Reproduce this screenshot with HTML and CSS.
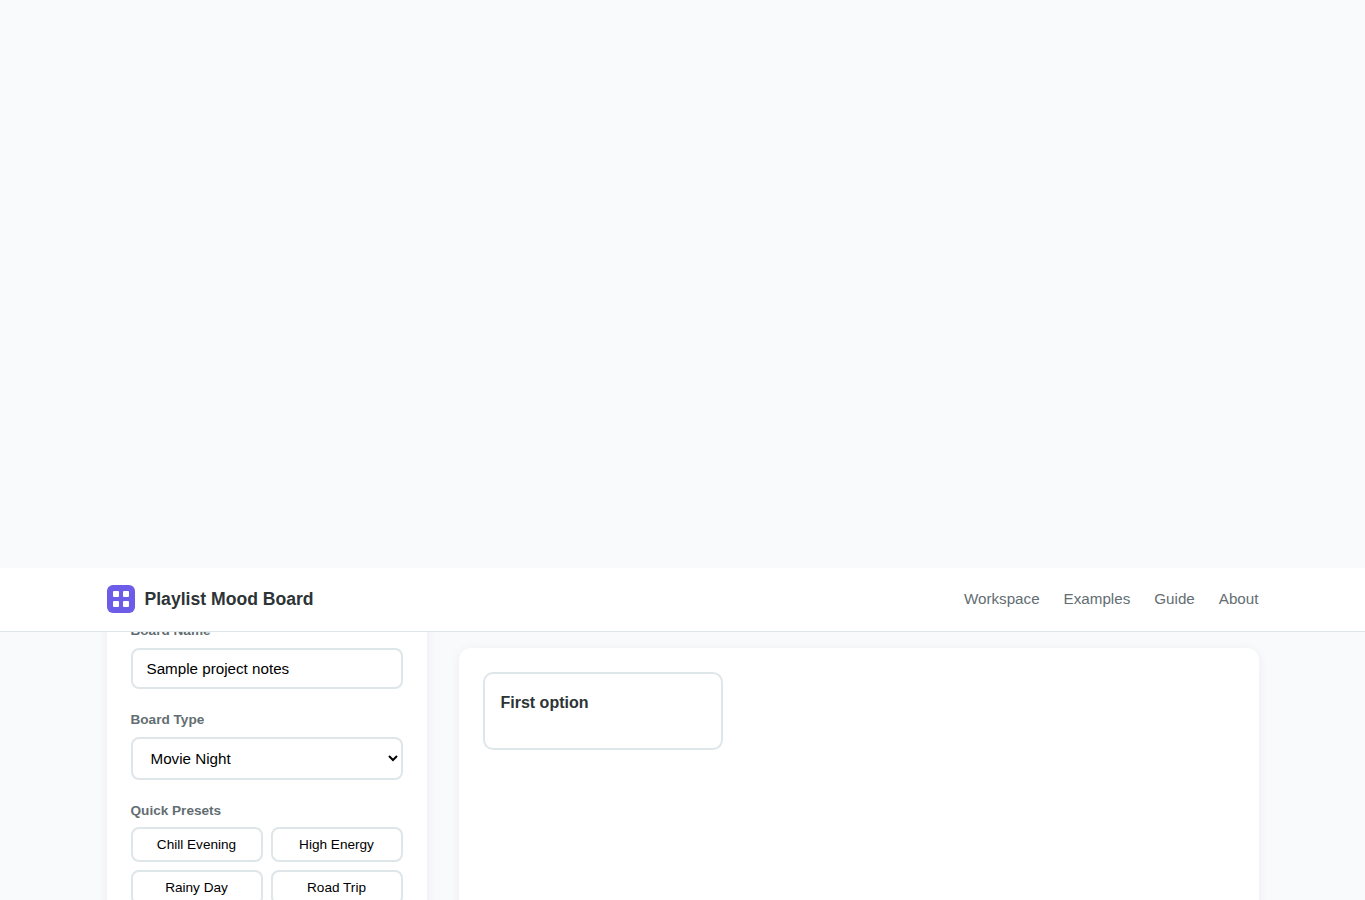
FILE: index.html
```html
<!DOCTYPE html>
<html lang="en">
  <head>
    <meta charset="UTF-8" />
    <meta name="viewport" content="width=device-width, initial-scale=1.0" />
    <title>Playlist Mood Board</title>
    <link rel="stylesheet" href="styles.css">
  </head>
  <body>
    <header class="header">
      <div class="header-inner">
        <a href="#" class="logo">
          <svg width="28" height="28" viewBox="0 0 28 28">
            <rect width="28" height="28" rx="6" fill="#6c5ce7" />
            <rect x="6" y="6" width="6" height="6" rx="1" fill="white" />
            <rect x="16" y="6" width="6" height="6" rx="1" fill="white" />
            <rect x="6" y="16" width="6" height="6" rx="1" fill="white" />
            <rect x="16" y="16" width="6" height="6" rx="1" fill="white" />
          </svg>
          <span>Playlist Mood Board</span>
        </a>
        <nav class="nav">
          <a href="#">Workspace</a>
          <a href="#">Examples</a>
          <a href="#">Guide</a>
          <a href="#">About</a>
        </nav>
      </div>
    </header>

    <main class="workspace">
      <aside class="controls">
        <div class="control-group">
          <label for="board-name">Board Name</label>
          <input type="text" id="board-name" value="Sample project notes" />
        </div>
        <div class="control-group">
          <label for="board-type">Board Type</label>
          <select id="board-type">
            <option>Movie Night</option>
          </select>
        </div>
        <div class="control-group">
          <label>Quick Presets</label>
          <div class="presets">
            <button>Chill Evening</button>
            <button>High Energy</button>
            <button>Rainy Day</button>
            <button>Road Trip</button>
          </div>
        </div>
      </aside>
      <section class="board">
        <div class="board-grid">
          <div class="card">
            <h3>First option</h3>
          </div>
        </div>
      </section>
    </main>
  </body>
</html>
```
FILE: styles.css
```css
* {
  box-sizing: border-box;
  margin: 0;
  padding: 0;
}
body {
  font-family: "Liberation Sans", Arial, sans-serif;
  background: #f8fafc;
  color: #2d3436;
  line-height: 1.6;
  height: 900px;
  padding-top: 568px;
  overflow: hidden;
}
.header {
  position: relative;
  z-index: 10;
  background: white;
  border-bottom: 1px solid #dfe6e9;
}
.header-inner {
  max-width: 1200px;
  height: 63px;
  margin: 0 auto;
  padding: 0 24px;
  display: flex;
  align-items: center;
  justify-content: space-between;
}
.logo {
  display: flex;
  align-items: center;
  gap: 10px;
  font-size: 17.6px;
  font-weight: 700;
  color: #2d3436;
  text-decoration: none;
}
.nav {
  display: flex;
  gap: 24px;
}
.nav a {
  font-size: 15.2px;
  color: #636e72;
  text-decoration: none;
}
.workspace {
  max-width: 1200px;
  margin: 0 auto;
  padding: 0 24px;
  display: grid;
  grid-template-columns: 320px 1fr;
  gap: 32px;
  align-items: start;
}
.controls,
.board {
  background: white;
  border-radius: 12px;
  padding: 24px;
  height: 400px;
  box-shadow: 0 2px 12px rgba(0, 0, 0, 0.06);
}
.controls {
  margin-top: -36px;
}
.board {
  margin-top: 16px;
}
.control-group {
  margin-bottom: 20px;
}
.control-group label {
  display: block;
  font-size: 13.6px;
  font-weight: 600;
  color: #636e72;
  margin-bottom: 6px;
}
.control-group input,
.control-group select {
  display: block;
  width: 100%;
  height: 41px;
  padding: 10px 14px;
  border: 2px solid #dfe6e9;
  border-radius: 8px;
  background: white;
  font-family: inherit;
  font-size: 15.2px;
  color: black;
}
.control-group select {
  height: 43px;
}
.presets {
  display: grid;
  grid-template-columns: 1fr 1fr;
  gap: 8px;
}
.presets button {
  height: 35px;
  border: 2px solid #dfe6e9;
  border-radius: 8px;
  background: white;
  font-family: inherit;
  font-size: 13.6px;
  color: black;
  cursor: pointer;
}
.board-grid {
  display: grid;
  grid-template-columns: repeat(auto-fill, minmax(220px, 1fr));
  gap: 16px;
}
.card {
  height: 78px;
  padding: 16px;
  border: 2px solid #dfe6e9;
  border-radius: 10px;
}
.card h3 {
  font-size: 16px;
  font-weight: 600;
}
```
